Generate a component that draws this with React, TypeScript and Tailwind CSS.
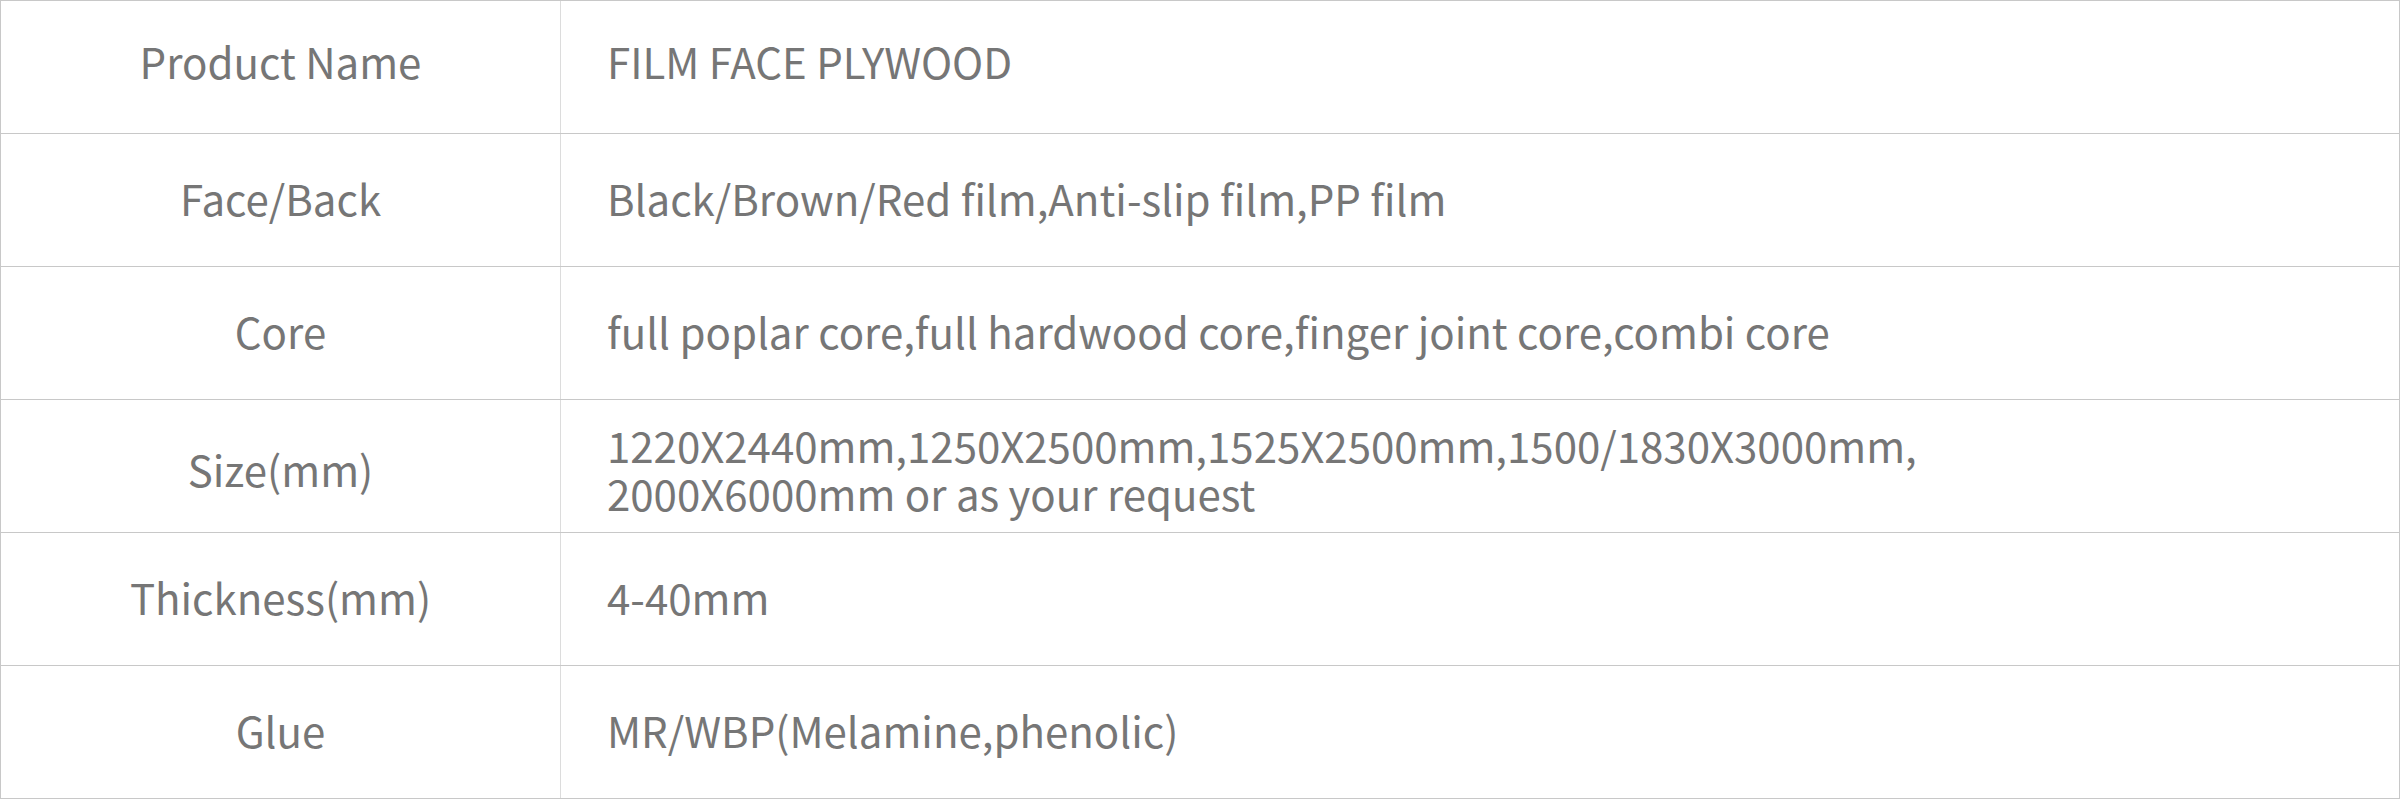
import React from "react";

type Row = { label: string; value: React.ReactNode; pad: string };

const rows: Row[] = [
  { label: "Product Name", value: "FILM FACE PLYWOOD", pad: "pb-[12px]" },
  { label: "Face/Back", value: "Black/Brown/Red film,Anti-slip film,PP film", pad: "pb-[4px]" },
  {
    label: "Core",
    value: "full poplar core,full hardwood core,finger joint core,combi core",
    pad: "pb-[4px]",
  },
  {
    label: "Size(mm)",
    value: (
      <>
        1220X2440mm,1250X2500mm,1525X2500mm,1500/1830X3000mm,
        <br />
        2000X6000mm or as your request
      </>
    ),
    pad: "pt-[5px]",
  },
  { label: "Thickness(mm)", value: "4-40mm", pad: "pb-[4px]" },
  { label: "Glue", value: "MR/WBP(Melamine,phenolic)", pad: "pb-[4px]" },
];

export default function App() {
  return (
    <div
      className="w-[2400px] h-[800px] bg-white text-[#767676] text-[42px] leading-[48px]"
      style={{ fontFamily: '"Noto Sans CJK SC", "Noto Sans", sans-serif' }}
    >
      <div className="border-t border-x border-[#c8c8c8]">
        {rows.map((row) => (
          <div
            key={row.label}
            className="grid grid-cols-[560px_1fr] h-[133px] border-b border-[#c8c8c8]"
          >
            <div
              className={`flex items-center justify-center border-r border-[#dcdcdc] ${row.pad}`}
            >
              {row.label}
            </div>
            <div className={`flex items-center pl-[46px] ${row.pad}`}>
              <div>{row.value}</div>
            </div>
          </div>
        ))}
      </div>
    </div>
  );
}
